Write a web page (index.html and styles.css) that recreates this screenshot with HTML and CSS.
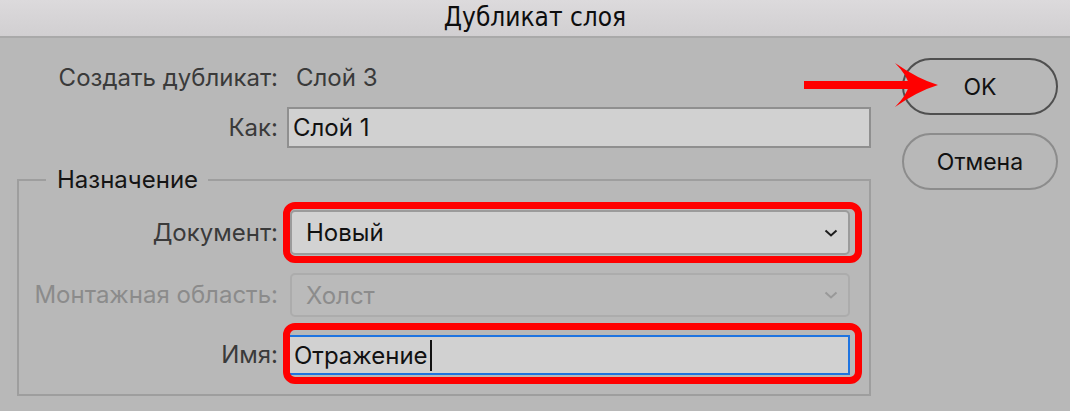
FILE: index.html
```html
<!DOCTYPE html>
<html lang="ru">
<head>
<meta charset="utf-8">
<title>Дубликат слоя</title>
<link rel="stylesheet" href="styles.css">
</head>
<body>
<div class="titlebar">Дубликат слоя</div>
<div class="dialog">
  <div class="form">
    <div class="row info">
      <span class="label">Создать дубликат:</span>
      <span class="value">Слой 3</span>
    </div>
    <div class="row">
      <span class="label">Как:</span>
      <div class="input">Слой 1</div>
    </div>
    <fieldset class="group">
      <legend>Назначение</legend>
      <div class="grow">
        <span class="label">Документ:</span>
        <div class="field">
          <div class="select">Новый<svg class="chev" viewBox="0 0 14 8" width="14" height="8"><path d="M1.5 1.5 L7 6.5 L12.5 1.5" fill="none" stroke="#1e1e1e" stroke-width="2"/></svg></div>
          <span class="mark mark-doc"></span>
        </div>
      </div>
      <div class="grow">
        <span class="label disabled">Монтажная область:</span>
        <div class="field">
          <div class="select is-disabled">Холст<svg class="chev" viewBox="0 0 14 8" width="14" height="8"><path d="M1.5 1.5 L7 6.5 L12.5 1.5" fill="none" stroke="#999" stroke-width="2"/></svg></div>
        </div>
      </div>
      <div class="grow">
        <span class="label">Имя:</span>
        <div class="field">
          <div class="input focus">Отражение<span class="caret"></span></div>
          <span class="mark mark-name"></span>
        </div>
      </div>
    </fieldset>
  </div>
  <div class="buttons">
    <button class="btn primary">OK</button>
    <button class="btn">Отмена</button>
  </div>
  <svg class="arrow" viewBox="0 0 140 64" width="140" height="64">
    <rect x="4" y="28" width="106" height="8" fill="#ff0000"/>
    <path d="M95 10 Q118 26 138 32 Q118 38 95 54 Q107 42 109 32 Q107 22 95 10 Z" fill="#ff0000"/>
  </svg>
</div>
</body>
</html>
```

FILE: styles.css
```css
* { box-sizing: border-box; }
html, body {
  margin: 0;
  padding: 0;
}
body {
  width: 1070px;
  height: 411px;
  overflow: hidden;
  background: #b8b8b8;
  font-family: Inter, "Noto Sans", "Liberation Sans", sans-serif;
  font-size: 24px;
  color: #3a3a3a;
}
.titlebar {
  height: 38px;
  background: linear-gradient(#dcdadc, #d1cfd1);
  border-bottom: 2px solid #a9a9a9;
  text-align: center;
  font-family: "Liberation Sans Narrow", "DejaVu Sans Condensed", "Liberation Sans", sans-serif;
  font-stretch: condensed;
  font-size: 26px;
  line-height: 35px;
  color: #0d0d0d;
}
.dialog {
  position: relative;
  display: flex;
  align-items: flex-start;
}
.form {
  width: 871px;
  padding-top: 27px;
}
.row {
  display: grid;
  grid-template-columns: 278px 1fr;
  column-gap: 9px;
  align-items: center;
}
.row + .row { margin-top: 16px; }
.label {
  text-align: right;
  white-space: nowrap;
  line-height: 26px;
}
.label.disabled { color: #8b8b8b; }
.info .value {
  padding-left: 9px;
  line-height: 26px;
}
.input {
  height: 41px;
  background: #d1d1d1;
  border: 2px solid #8f8f8f;
  padding-left: 4px;
  display: flex;
  align-items: center;
  color: #111;
}
.group {
  margin: 18px 0 0 17px;
  padding: 17px 19px 19px 0;
  border: 2px solid #9e9e9e;
  min-width: 0;
}
.group legend {
  margin-left: 27px;
  padding: 0 10px 0 11px;
  line-height: 27px;
  color: #151515;
}
.grow {
  display: grid;
  grid-template-columns: 259px 1fr;
  column-gap: 12px;
  align-items: center;
}
.grow + .grow { margin-top: 18px; }
.field { position: relative; }
.select {
  height: 45px;
  background: #d2d2d2;
  border: 2px solid #9b9b9b;
  border-radius: 5px;
  padding: 0 10px 0 14px;
  display: flex;
  align-items: center;
  justify-content: space-between;
  color: #111;
}
.select.is-disabled {
  height: 44px;
  background: #bababa;
  border-color: #acacac;
  color: #8c8c8c;
}
.chev { flex: none; }
.input.focus {
  height: 40px;
  margin-left: -2px;
  border-color: #1f74e0;
  padding-left: 4px;
}
.caret {
  display: inline-block;
  width: 2px;
  height: 31px;
  background: #111;
  margin-left: 2px;
}
.mark {
  position: absolute;
  border: 7px solid #ff0000;
  border-radius: 12px;
  pointer-events: none;
}
.mark-doc { top: -8px; left: -7px; right: -12px; bottom: -8px; }
.mark-name { top: -12px; left: -7px; right: -12px; bottom: -9px; }
.buttons {
  margin-left: 31px;
  width: 156px;
  padding-top: 20px;
  display: flex;
  flex-direction: column;
  gap: 18px;
}
.btn {
  height: 57px;
  border-radius: 29px;
  border: 2px solid #8c8c8c;
  background: transparent;
  font-family: inherit;
  font-size: 23px;
  color: #111;
  padding: 0;
}
.btn.primary { border-color: #4f4f4f; }
.arrow {
  position: absolute;
  left: 800px;
  top: 15px;
}
```
